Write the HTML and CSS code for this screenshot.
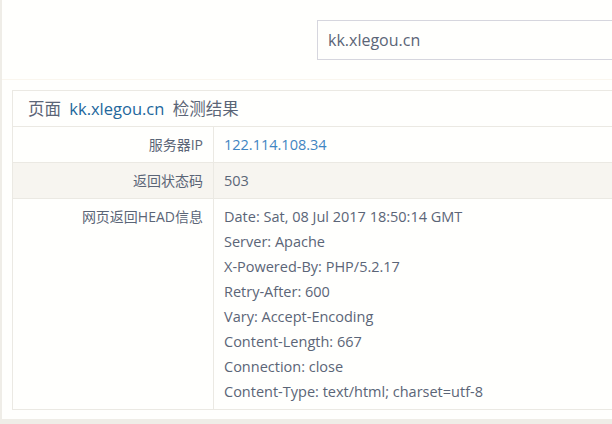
FILE: index.html
```html
<!DOCTYPE html>
<html lang="zh-CN">
<head>
    <meta charset="UTF-8">
    <title>检测结果</title>
    <link rel="stylesheet" href="styles.css">
</head>
<body>

    <div class="wrap">
        <div class="search">
            <input class="search-input" type="text" value="kk.xlegou.cn">
        </div>

        <div class="panel">
            <div class="panel-head">
                页面 <a href="#" class="site">kk.xlegou.cn</a> 检测结果
            </div>
            <table>
                <tr>
                    <th>服务器IP</th>
                    <td><a href="#" class="ip">122.114.108.34</a></td>
                </tr>
                <tr class="alt">
                    <th>返回状态码</th>
                    <td>503</td>
                </tr>
                <tr>
                    <th>网页返回HEAD信息</th>
                    <td>
                        Date: Sat, 08 Jul 2017 18:50:14 GMT<br>
                        Server: Apache<br>
                        X-Powered-By: PHP/5.2.17<br>
                        Retry-After: 600<br>
                        Vary: Accept-Encoding<br>
                        Content-Length: 667<br>
                        Connection: close<br>
                        Content-Type: text/html; charset=utf-8
                    </td>
                </tr>
            </table>
        </div>
    </div>

</body>
</html>
```

FILE: styles.css
```css
html, body {
    margin: 0;
    padding: 0;
}

body {
    font-family: "Open Sans", "Noto Sans CJK SC", sans-serif;
    background-color: #efede7;
    color: #5b6577;
    overflow: hidden;
}

.wrap {
    margin-left: 2px;
    background: #fffffd;
    height: 419px;
    overflow: hidden;
}

.search {
    height: 80px;
    border-bottom: 1px solid #faf6ee;
    box-sizing: border-box;
    padding: 20px 0 0 315px;
}

.search-input {
    display: block;
    width: 420px;
    height: 40px;
    box-sizing: border-box;
    border: 1px solid #d6d6de;
    padding: 0 10px;
    font-family: inherit;
    font-size: 16px;
    color: #5b6577;
    background: #fffffd;
    outline: none;
}

.panel {
    margin: 10px 0 0 10px;
    width: 700px;
    border: 1px solid #ebe9e3;
    border-right: none;
}

.panel-head {
    height: 35px;
    line-height: 35px;
    padding-left: 15px;
    font-size: 16.5px;
    border-bottom: 1px solid #ebe9e3;
}

.panel-head .site {
    color: #23679c;
    margin: 0 4px;
}

a {
    text-decoration: none;
}

table {
    width: 100%;
    border-collapse: collapse;
}

th, td {
    padding: 5px 10px;
    line-height: 25px;
    font-size: 14.5px;
    vertical-align: top;
    text-align: left;
    border-top: 1px solid #ebe9e3;
}

tr:first-child th, tr:first-child td {
    border-top: none;
}

th {
    width: 180px;
    text-align: right;
    font-weight: normal;
    font-size: 14px;
    border-right: 1px solid #ebe9e3;
}

tr.alt {
    background-color: #f7f5f0;
}

.ip {
    color: #3f85c2;
}
```
